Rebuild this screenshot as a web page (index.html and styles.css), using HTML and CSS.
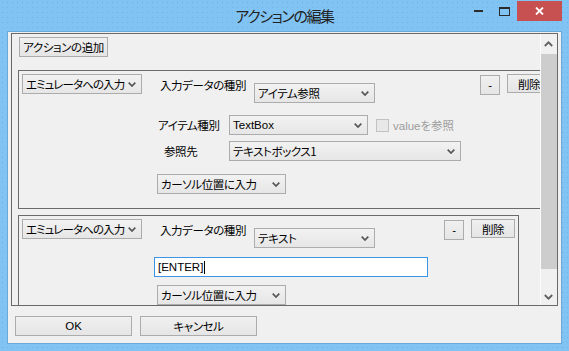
FILE: index.html
```html
<!DOCTYPE html>
<html>

<head>
    <title>アクションの編集</title>
    <link rel="stylesheet" href="styles.css">
</head>

<body>
    <div class="window">
        <div class="titlebar">
            <span></span>
            <div class="title">アクションの編集</div>
            <div class="caption">
                <span class="cap">
                    <svg width="9" height="2"><rect width="9" height="2" fill="#2b2b2b"/></svg>
                </span>
                <span class="cap">
                    <svg width="11" height="9"><rect x="0.5" y="1" width="10" height="7.5" fill="none" stroke="#2b2b2b" stroke-width="1"/><rect x="0" y="0" width="11" height="2" fill="#2b2b2b"/></svg>
                </span>
                <span class="cap close">
                    <svg width="9" height="8"><path d="M1 0.5 L8 7.5 M8 0.5 L1 7.5" stroke="#fff" stroke-width="1.8"/></svg>
                </span>
            </div>
        </div>

        <div class="client">
            <div class="panel">
                <div class="panel-view">
                    <button class="btn add">アクションの追加</button>

                    <div class="group wide">
                        <div class="combo lead">エミュレータへの入力<svg class="chev" width="8" height="5"><path d="M0.7 0.7 L4 4 L7.3 0.7" stroke="#555" stroke-width="1.7" fill="none"/></svg></div>
                        <div class="gbody">
                            <div class="head">
                                <span class="label kind">入力データの種別</span>
                                <div class="combo w121">アイテム参照<svg class="chev" width="8" height="5"><path d="M0.7 0.7 L4 4 L7.3 0.7" stroke="#555" stroke-width="1.7" fill="none"/></svg></div>
                                <button class="btn minus">-</button>
                                <button class="btn del">削除</button>
                            </div>
                            <div class="row r-item">
                                <span class="label col">アイテム種別</span>
                                <div class="combo w139 latin">TextBox<svg class="chev" width="8" height="5"><path d="M0.7 0.7 L4 4 L7.3 0.7" stroke="#555" stroke-width="1.7" fill="none"/></svg></div>
                                <span class="check"></span>
                                <span class="disabled">valueを参照</span>
                            </div>
                            <div class="row r-ref">
                                <span class="label col indent">参照先</span>
                                <div class="combo w232">テキストボックス1<svg class="chev" width="8" height="5"><path d="M0.7 0.7 L4 4 L7.3 0.7" stroke="#555" stroke-width="1.7" fill="none"/></svg></div>
                            </div>
                            <div class="row r-pos">
                                <div class="combo w129">カーソル位置に入力<svg class="chev" width="8" height="5"><path d="M0.7 0.7 L4 4 L7.3 0.7" stroke="#555" stroke-width="1.7" fill="none"/></svg></div>
                            </div>
                        </div>
                    </div>

                    <div class="group narrow">
                        <div class="combo lead">エミュレータへの入力<svg class="chev" width="8" height="5"><path d="M0.7 0.7 L4 4 L7.3 0.7" stroke="#555" stroke-width="1.7" fill="none"/></svg></div>
                        <div class="gbody">
                            <div class="head">
                                <span class="label kind">入力データの種別</span>
                                <div class="combo w121">テキスト<svg class="chev" width="8" height="5"><path d="M0.7 0.7 L4 4 L7.3 0.7" stroke="#555" stroke-width="1.7" fill="none"/></svg></div>
                                <button class="btn minus">-</button>
                                <button class="btn del">削除</button>
                            </div>
                            <div class="row r-text">
                                <div class="textbox">[ENTER]<span class="caret"></span></div>
                            </div>
                            <div class="row r-pos2">
                                <div class="combo w129">カーソル位置に入力<svg class="chev" width="8" height="5"><path d="M0.7 0.7 L4 4 L7.3 0.7" stroke="#555" stroke-width="1.7" fill="none"/></svg></div>
                            </div>
                        </div>
                    </div>
                </div>

                <div class="vscroll">
                    <div class="arrow up">
                        <svg width="9" height="6"><path d="M0.8 5 L4.5 1.3 L8.2 5" stroke="#606060" stroke-width="1.8" fill="none"/></svg>
                    </div>
                    <div class="thumb"></div>
                    <div class="track"></div>
                    <div class="arrow down">
                        <svg width="9" height="6"><path d="M0.8 1 L4.5 4.7 L8.2 1" stroke="#606060" stroke-width="1.8" fill="none"/></svg>
                    </div>
                </div>
            </div>

            <div class="footer">
                <button class="btn wide-btn latin">OK</button>
                <button class="btn wide-btn">キャンセル</button>
            </div>
        </div>
    </div>
</body>

</html>
```

FILE: styles.css
```css
body {
    margin: 0;
    width: 569px;
    height: 351px;
    overflow: hidden;
    background-color: #81c4f4;
    background-image: radial-gradient(circle, #6eb3ea 0.7px, transparent 1px);
    background-size: 5px 5px;
    font-family: "Noto Sans CJK JP", "Liberation Sans", sans-serif;
    font-size: 11.5px;
    letter-spacing: -0.4px;
    font-feature-settings: "palt";
    color: #000;
}

.window {
    display: flex;
    flex-direction: column;
    height: 100%;
}

/* title bar */
.titlebar {
    height: 31px;
    display: grid;
    grid-template-columns: 1fr auto 1fr;
    flex-shrink: 0;
}

.title {
    font-size: 15px;
    line-height: 32px;
    color: #222;
    letter-spacing: -1.4px;
}

.caption {
    display: flex;
    justify-content: flex-end;
    align-items: flex-start;
    padding: 1px 7px 0 0;
}

.cap {
    width: 26px;
    height: 20px;
    display: flex;
    align-items: center;
    justify-content: center;
}

.cap svg {
    display: block;
}

.cap.close {
    width: 45px;
    background: #c75050;
}

/* client area */
.client {
    flex: 1;
    margin: 0 7px 7px 7px;
    border: 1px solid #6aa9dc;
    background: #f0f0f0;
    padding: 1px 0 0 3px;
}

.panel {
    width: 547px;
    height: 273px;
    box-sizing: border-box;
    border: 1px solid #696969;
    display: flex;
}

.panel-view {
    flex: 1;
    overflow: hidden;
    padding: 3px 0 0 6px;
}

.btn {
    font-family: inherit;
    font-size: inherit;
    letter-spacing: inherit;
    font-feature-settings: "palt";
    box-sizing: border-box;
    border: 1px solid #acacac;
    background: linear-gradient(#f0f0f0, #e5e5e5);
    color: #000;
    padding: 0;
    line-height: 16px;
    white-space: nowrap;
    display: block;
}

.btn.add {
    width: 89px;
    height: 20px;
    margin-left: 1px;
}

/* action groups */
.group {
    box-sizing: border-box;
    border: 1px solid #6b6b6b;
    height: 139px;
    display: flex;
    align-items: flex-start;
    padding: 3px 3px 0 3px;
}

.group.wide {
    width: 537px;
    margin-top: 13px;
}

.group.narrow {
    width: 501px;
    margin-top: 6px;
}

.combo {
    box-sizing: border-box;
    height: 20px;
    border: 1px solid #acacac;
    background: linear-gradient(#f2f2f2, #e6e6e6);
    line-height: 18px;
    padding: 0 0 0 3px;
    display: flex;
    align-items: center;
    white-space: nowrap;
    flex-shrink: 0;
}

.combo .chev {
    margin-left: auto;
    margin-right: 5px;
    flex-shrink: 0;
}

.latin {
    font-family: "Liberation Sans", "Noto Sans CJK JP", sans-serif;
    letter-spacing: 0;
}

.combo.lead {
    width: 120px;
    letter-spacing: -0.9px;
}

.w121 {
    width: 121px;
}

.w139 {
    width: 139px;
}

.w232 {
    width: 232px;
}

.w129 {
    width: 129px;
}

.gbody {
    flex: 1;
    margin-left: 15px;
    display: flex;
    flex-direction: column;
}

.head {
    display: flex;
    align-items: flex-start;
}

.label {
    line-height: 20px;
    white-space: nowrap;
}

.label.kind {
    width: 94px;
    margin-left: 3px;
    margin-top: 1px;
}

.head .combo {
    margin-top: 9px;
}

.btn.minus {
    width: 20px;
    height: 20px;
    margin-left: auto;
    margin-top: 1px;
    font-family: "Liberation Sans", sans-serif;
}

.btn.del {
    width: 44px;
    height: 19px;
    margin-left: 7px;
}

.row {
    display: flex;
    align-items: center;
}

.label.col {
    width: 71px;
    padding-left: 1px;
}

.label.col.indent {
    width: 65px;
    padding-left: 7px;
}

.r-item {
    margin-top: 12px;
}

.r-ref {
    margin-top: 6px;
}

.r-pos {
    margin-top: 13px;
}

.check {
    width: 13px;
    height: 13px;
    box-sizing: border-box;
    border: 1px solid #c2c2c2;
    background: #e8e8e8;
    margin-left: 8px;
}

.disabled {
    color: #9d9d9d;
    margin-left: 4px;
    font-family: "Liberation Sans", "Noto Sans CJK JP", sans-serif;
    letter-spacing: 0;
}

.r-text {
    margin-top: 9px;
}

.textbox {
    box-sizing: border-box;
    width: 274px;
    height: 20px;
    margin-left: -3px;
    border: 1px solid #3c94e6;
    background: #fff;
    padding-left: 3px;
    line-height: 18px;
    display: flex;
    align-items: center;
    font-family: "Liberation Sans", sans-serif;
    letter-spacing: 0;
}

.caret {
    width: 1px;
    height: 13px;
    background: #000;
    margin-left: 1px;
}

.r-pos2 {
    margin-top: 8px;
}

/* scroll bar */
.vscroll {
    width: 17px;
    flex-shrink: 0;
    display: flex;
    flex-direction: column;
    background: #f0f0f0;
    box-shadow: inset 1px 0 #fbfbfb;
}

.arrow {
    display: flex;
    justify-content: center;
    align-items: center;
}

.arrow svg {
    display: block;
}

.arrow.up {
    height: 20px;
}

.arrow.down {
    height: 17px;
}

.thumb {
    height: 215px;
    margin-left: 1px;
    background: #cdcdcd;
}

.track {
    flex: 1;
}

/* dialog buttons */
.footer {
    display: flex;
    gap: 8px;
    margin-top: 10px;
    padding-left: 4px;
}

.btn.wide-btn {
    width: 117px;
    height: 20px;
}
```
